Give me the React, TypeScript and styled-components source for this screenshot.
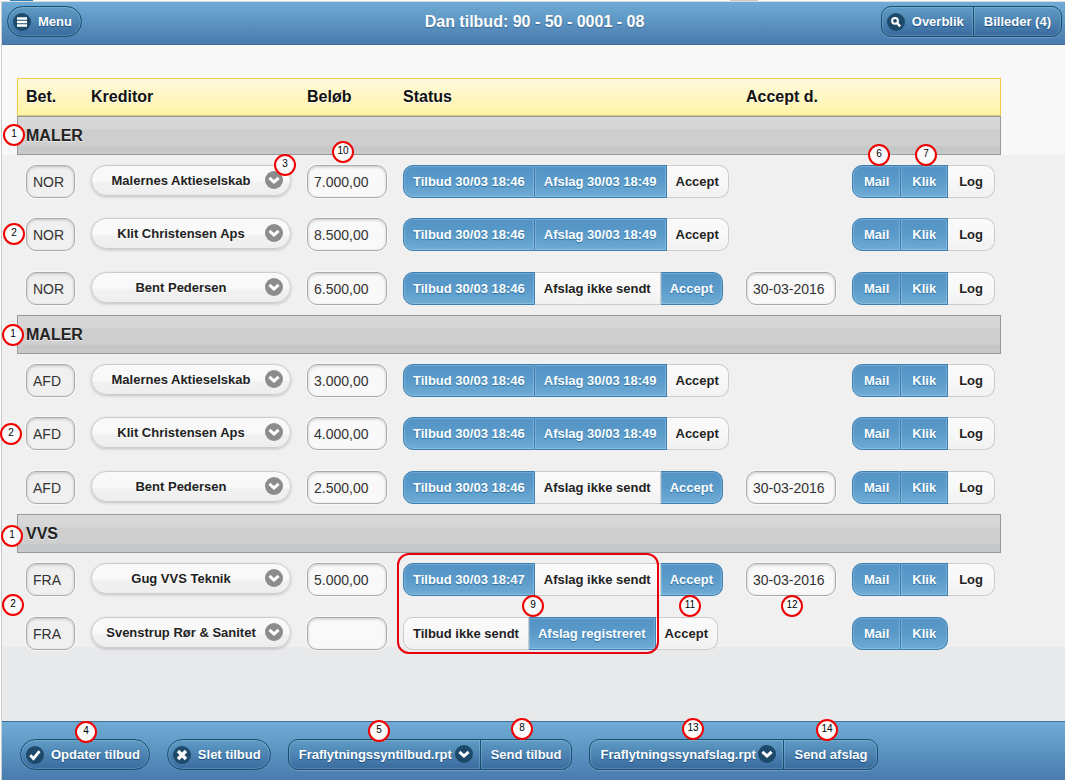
import React from "react";
import styled, { createGlobalStyle, css } from "styled-components";

const GlobalStyle = createGlobalStyle`
  *, *::before, *::after { box-sizing: border-box; }
  body {
    margin: 0;
    background: #fff;
    color: #222;
    font-family: "Liberation Sans", Arial, sans-serif;
  }
  button, input, select { font-family: inherit; margin: 0; }
`;

const Page = styled.div`
  position: relative;
  display: flex;
  flex-direction: column;
  min-height: 100vh;
`;

const WindowEdge = styled.div`
  height: 2px;
  border-bottom: 1px solid #dcdcdc;
  background: linear-gradient(
    to right,
    #fff 10px, #2f7fb8 10px, #2f7fb8 33px, #fff 33px,
    #fff 730px, #c8c8c8 730px, #c8c8c8 758px, #fff 758px
  );
`;

const Frame = styled.div`
  flex: 1;
  display: flex;
  flex-direction: column;
  margin-left: 1px;
  border-left: 1px solid #ccc;
`;

const Header = styled.header`
  display: grid;
  grid-template-columns: 1fr auto 1fr;
  align-items: start;
  height: 43px;
  padding: 4px 3px 0 5px;
  border-bottom: 1px solid #456f9a;
  background: linear-gradient(#6facd5, #497bae);
`;

const Title = styled.h1`
  margin: 0;
  color: #fff;
  font-size: 16px;
  line-height: 31px;
  text-shadow: 0 1px 1px #3e6790;
`;

const HeaderEnd = styled.div`
  display: flex;
  justify-content: flex-end;
`;

const barControl = css`
  height: 31px;
  border: 1px solid #145072;
  background: linear-gradient(#5f9cc5, #396b9e);
  box-shadow: inset 0 0 1px 1px rgba(255, 255, 255, 0.18);
  color: #fff;
  font-size: 13px;
  font-weight: bold;
  line-height: 16px;
  text-shadow: 0 1px 1px #194b7e;
  white-space: nowrap;
`;

const BarButton = styled.button`
  ${barControl}
  display: inline-flex;
  align-items: center;
  gap: 7px;
  padding: 0 9px 0 5px;
  border-radius: 16px;
`;

const BarGroup = styled.div`
  display: inline-flex;
  border-radius: 10px;
  box-shadow: 0 1px 0 rgba(255, 255, 255, 0.2);

  > * + * { margin-left: -1px; }
  > :first-child, > :first-child select { border-radius: 10px 0 0 10px; }
  > :last-child { border-radius: 0 10px 10px 0; }
`;

const GroupButton = styled.button<{ $icon?: boolean }>`
  ${barControl}
  display: inline-flex;
  align-items: center;
  gap: 7px;
  padding: 0 ${(p) => (p.$icon ? "9px 0 5px" : "10px")};
`;

const Content = styled.main`
  flex: 1;
  padding: 33px 64px 33px 15px;
  background: linear-gradient(
    #f8f8f8 110px, #f0f0f0 110px, #f0f0f0 602px, #e8e9eb 602px
  );
`;

const OfferTable = styled.table`
  width: 100%;
  table-layout: fixed;
  border-collapse: separate;
  border-spacing: 0;
`;

const Column = styled.col<{ $width?: number }>`
  width: ${(p) => (p.$width ? `${p.$width}px` : "auto")};
`;

const HeadCell = styled.th`
  height: 38px;
  padding: 0 0 0 9px;
  border: 0 solid #f7c942;
  border-width: 1px 0;
  border-bottom-color: #d9c77c;
  background: linear-gradient(#fffadf, #fff3a5);
  color: #111;
  font-size: 16px;
  line-height: 20px;
  text-align: left;
  text-shadow: 0 1px 0 #fff;

  &:first-child { border-left-width: 1px; padding-left: 8px; }
  &:last-child { border-right-width: 1px; }
`;

const SectionCell = styled.th`
  height: 39px;
  padding: 0 0 0 8px;
  border: 1px solid #999;
  background: linear-gradient(
    #d8d8d8, #d6d6d6 12px, #cecece 13px, #cfcfcf 28px, #c5c6c8 30px, #c8c9cb
  );
  font-size: 16px;
  line-height: 20px;
  text-align: left;
  text-shadow: 0 1px 0 #eee;
`;

const Cell = styled.td`
  height: 53px;
  padding: 10px 0 0 9px;
  vertical-align: top;

  tr:last-child > & { height: 54px; padding-top: 11px; }
`;

const Field = styled.input<{ $width: number; $muted?: boolean }>`
  display: block;
  width: ${(p) => p.$width}px;
  height: 33px;
  padding: 0 6px;
  border: 1px solid #aaa;
  border-radius: 10px;
  background: ${(p) => (p.$muted ? "#f0f0f0" : "#f9f9f9")};
  box-shadow: inset 0 1px 3px rgba(0, 0, 0, 0.2), 0 0 0 1px rgba(255, 255, 255, 0.5);
  color: #333;
  font-size: 14px;
`;

const SelectShell = styled.div`
  position: relative;
  display: inline-flex;

  svg {
    position: absolute;
    top: 6px;
    right: 8px;
    pointer-events: none;
  }
`;

const CreditorSelect = styled.select`
  appearance: none;
  width: 200px;
  height: 31px;
  padding: 0 33px 0 13px;
  border: 1px solid #ccc;
  border-radius: 16px;
  background: linear-gradient(#f9f9f9 50%, #f1f1f1 60%, #eee);
  box-shadow: 0 1px 3px rgba(0, 0, 0, 0.2);
  color: #222;
  font-size: 13px;
  font-weight: bold;
  text-align-last: center;
  text-shadow: 0 1px 0 #fff;
`;

const ReportSelect = styled.select<{ $width: number }>`
  ${barControl}
  appearance: none;
  width: ${(p) => p.$width}px;
  padding: 0 27px 0 10px;
`;

const Segments = styled.div<{ $pad: number }>`
  display: flex;

  > button { padding: 0 ${(p) => p.$pad}px; }
  > :first-child { border-left-width: 1px; border-radius: 10px 0 0 10px; }
  > :last-child { border-radius: 0 10px 10px 0; }
`;

const Segment = styled.button<{ $on?: boolean }>`
  height: 33px;
  border: 1px solid ${(p) => (p.$on ? "#3a80b5" : "#ccc")};
  border-left-width: 0;
  background: ${(p) =>
    p.$on
      ? "linear-gradient(#5393c5, #5b9bca 50%, #6facd5)"
      : "linear-gradient(#fafafa, #f8f8f8 50%, #f1f1f1)"};
  box-shadow: inset 0 0 1px 1px rgba(255, 255, 255, 0.2);
  color: ${(p) => (p.$on ? "#fff" : "#222")};
  font-size: 13px;
  font-weight: bold;
  line-height: 16px;
  text-shadow: ${(p) => (p.$on ? "0 1px 1px #2a6ea0" : "0 1px 0 #fff")};
  white-space: nowrap;
`;

const Footer = styled.footer`
  position: relative;
  display: flex;
  align-items: flex-start;
  gap: 17px;
  height: 59px;
  padding: 17px 0 0 18px;
  border-top: 1px solid #456f9a;
  background: linear-gradient(#6facd5, #497bae);
`;

const Marker = styled.span<{ $x: number; $y: number }>`
  position: absolute;
  left: ${(p) => p.$x - 11}px;
  top: ${(p) => p.$y - 11}px;
  width: 22px;
  height: 22px;
  border: 2px solid #f00000;
  border-radius: 50%;
  background: #fcfcfc;
  color: #000;
  font-size: 10px;
  line-height: 16px;
  text-align: center;
`;

const Highlight = styled.div`
  position: absolute;
  left: 397px;
  top: 553px;
  width: 262px;
  height: 101px;
  border: 2px solid #e8000c;
  border-radius: 12px;
  pointer-events: none;
`;

type IconKind = "bars" | "search" | "check" | "cross" | "down";

const iconPaths: Record<IconKind, React.ReactNode> = {
  bars: <path d="M4 5.5h10M4 9h10M4 12.5h10" strokeWidth="2.4" />,
  search: (
    <>
      <circle cx="8" cy="7.8" r="2.9" strokeWidth="2" />
      <path d="M10.2 10.2l3 3.2" strokeWidth="2.4" />
    </>
  ),
  check: <path d="M4.3 9.3l3.2 3.4 6-7.6" strokeWidth="2.8" />,
  cross: <path d="M5 5l8 8M13 5l-8 8" strokeWidth="3.4" />,
  down: <path d="M4.4 6.8L9 11l4.6-4.2" strokeWidth="3" />,
};

function DiscIcon({ kind, disc = "#1d4a6b" }: { kind: IconKind; disc?: string }) {
  return (
    <svg width="18" height="18" viewBox="0 0 18 18" fill="none" stroke="#fff" aria-hidden="true">
      <circle cx="9" cy="9" r="9" fill={disc} stroke="none" />
      {iconPaths[kind]}
    </svg>
  );
}

type Seg = [label: string, on: boolean];
interface Offer {
  creditor: string;
  amount: string;
  status: Seg[];
  accepted?: string;
  log: boolean;
}
interface Section {
  name: string;
  code: string;
  offers: Offer[];
}

const rejected = (creditor: string, amount: string): Offer => ({
  creditor,
  amount,
  status: [["Tilbud 30/03 18:46", true], ["Afslag 30/03 18:49", true], ["Accept", false]],
  log: true,
});

const accepted = (creditor: string, amount: string, time: string): Offer => ({
  creditor,
  amount,
  status: [[`Tilbud 30/03 ${time}`, true], ["Afslag ikke sendt", false], ["Accept", true]],
  accepted: "30-03-2016",
  log: true,
});

const sections: Section[] = [
  {
    name: "MALER",
    code: "NOR",
    offers: [
      rejected("Malernes Aktieselskab", "7.000,00"),
      rejected("Klit Christensen Aps", "8.500,00"),
      accepted("Bent Pedersen", "6.500,00", "18:46"),
    ],
  },
  {
    name: "MALER",
    code: "AFD",
    offers: [
      rejected("Malernes Aktieselskab", "3.000,00"),
      rejected("Klit Christensen Aps", "4.000,00"),
      accepted("Bent Pedersen", "2.500,00", "18:46"),
    ],
  },
  {
    name: "VVS",
    code: "FRA",
    offers: [
      accepted("Gug VVS Teknik", "5.000,00", "18:47"),
      {
        creditor: "Svenstrup Rør & Sanitet",
        amount: "",
        status: [["Tilbud ikke sendt", false], ["Afslag registreret", true], ["Accept", false]],
        log: false,
      },
    ],
  },
];

type Pin = [label: string, x: number, y: number];

const pagePins: Pin[] = [
  ["1", 14, 135], ["1", 13, 335], ["1", 12, 536],
  ["2", 14, 234], ["2", 11, 434], ["2", 13, 605],
  ["3", 285, 165], ["10", 343, 152], ["6", 879, 155], ["7", 926, 155],
  ["9", 533, 606], ["11", 690, 606], ["12", 792, 606],
];

const footerPins: Pin[] = [
  ["4", 84, 10], ["5", 377, 9], ["8", 520, 7], ["13", 691, 7], ["14", 825, 8],
];

function Pins({ pins }: { pins: Pin[] }) {
  return (
    <>
      {pins.map(([label, x, y]) => (
        <Marker key={`${x}-${y}`} $x={x} $y={y}>{label}</Marker>
      ))}
    </>
  );
}

function OfferRow({ code, offer }: { code: string; offer: Offer }) {
  return (
    <tr>
      <Cell><Field $width={49} $muted readOnly aria-label="Bet." defaultValue={code} /></Cell>
      <Cell>
        <SelectShell>
          <CreditorSelect aria-label="Kreditor">
            <option>{offer.creditor}</option>
          </CreditorSelect>
          <DiscIcon kind="down" disc="#8c8c8c" />
        </SelectShell>
      </Cell>
      <Cell><Field $width={80} aria-label="Beløb" defaultValue={offer.amount} /></Cell>
      <Cell>
        <Segments $pad={9}>
          {offer.status.map(([label, on]) => (
            <Segment key={label} $on={on} aria-pressed={on}>{label}</Segment>
          ))}
        </Segments>
      </Cell>
      <Cell>
        {offer.accepted && <Field $width={90} aria-label="Accept d." defaultValue={offer.accepted} />}
      </Cell>
      <Cell>
        <Segments $pad={11}>
          <Segment $on>Mail</Segment>
          <Segment $on>Klik</Segment>
          {offer.log && <Segment>Log</Segment>}
        </Segments>
      </Cell>
    </tr>
  );
}

function ReportGroup({ file, width, action }: { file: string; width: number; action: string }) {
  return (
    <BarGroup>
      <SelectShell>
        <ReportSelect $width={width} aria-label="Rapport">
          <option>{file}</option>
        </ReportSelect>
        <DiscIcon kind="down" />
      </SelectShell>
      <GroupButton>{action}</GroupButton>
    </BarGroup>
  );
}

export default function App() {
  return (
    <Page>
      <GlobalStyle />
      <WindowEdge />
      <Frame>
        <Header>
          <div>
            <BarButton><DiscIcon kind="bars" />Menu</BarButton>
          </div>
          <Title>Dan tilbud: 90 - 50 - 0001 - 08</Title>
          <HeaderEnd>
            <BarGroup>
              <GroupButton $icon><DiscIcon kind="search" />Overblik</GroupButton>
              <GroupButton>Billeder (4)</GroupButton>
            </BarGroup>
          </HeaderEnd>
        </Header>
        <Content>
          <OfferTable>
            <colgroup>
              <Column $width={65} />
              <Column $width={216} />
              <Column $width={96} />
              <Column $width={343} />
              <Column $width={106} />
              <Column />
            </colgroup>
            <thead>
              <tr>
                <HeadCell>Bet.</HeadCell>
                <HeadCell>Kreditor</HeadCell>
                <HeadCell>Beløb</HeadCell>
                <HeadCell>Status</HeadCell>
                <HeadCell>Accept d.</HeadCell>
                <HeadCell />
              </tr>
            </thead>
            {sections.map((section) => (
              <tbody key={section.code}>
                <tr><SectionCell colSpan={6}>{section.name}</SectionCell></tr>
                {section.offers.map((offer) => (
                  <OfferRow key={offer.creditor} code={section.code} offer={offer} />
                ))}
              </tbody>
            ))}
          </OfferTable>
        </Content>
        <Footer>
          <BarButton><DiscIcon kind="check" />Opdater tilbud</BarButton>
          <BarButton><DiscIcon kind="cross" />Slet tilbud</BarButton>
          <ReportGroup file="Fraflytningssyntilbud.rpt" width={193} action="Send tilbud" />
          <ReportGroup file="Fraflytningssynafslag.rpt" width={195} action="Send afslag" />
          <Pins pins={footerPins} />
        </Footer>
      </Frame>
      <Highlight />
      <Pins pins={pagePins} />
    </Page>
  );
}
